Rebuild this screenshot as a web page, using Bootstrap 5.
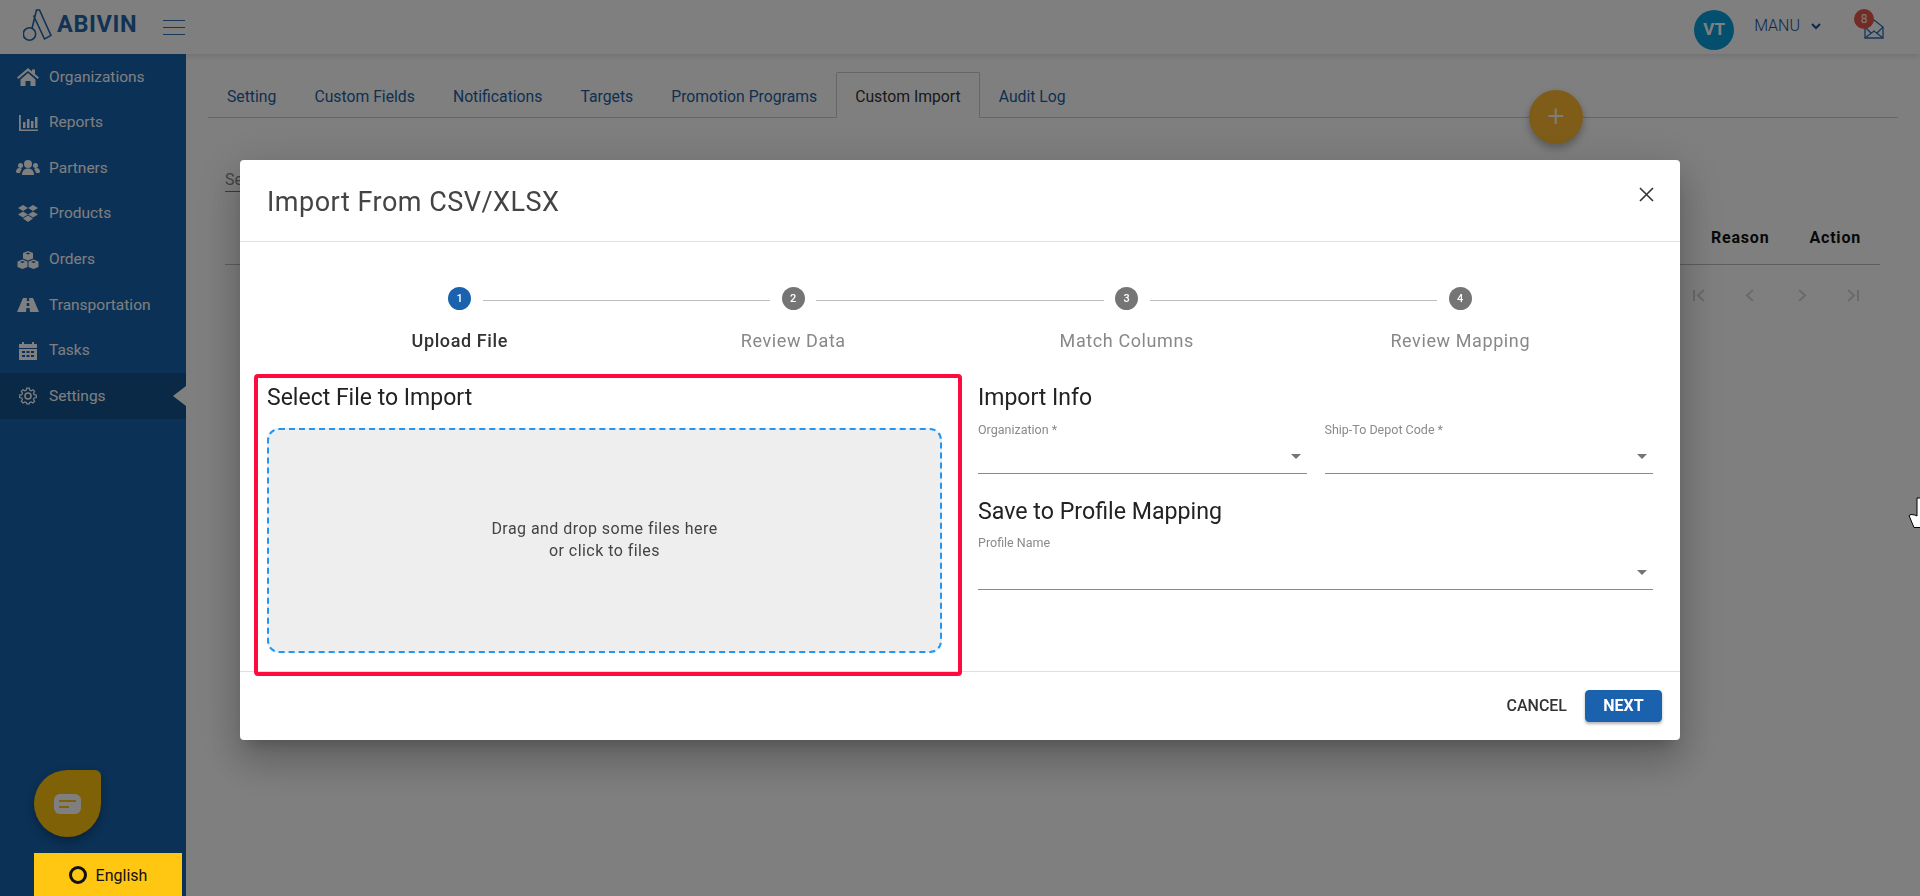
<!DOCTYPE html>
<html lang="en">
<head>
    <meta charset="UTF-8">
    <title>Import From CSV/XLSX - Abivin</title>
    <link href="https://cdn.jsdelivr.net/npm/bootstrap@5.3.0/dist/css/bootstrap.min.css" rel="stylesheet">
    <style>
        body {
            font-family: Roboto, "Liberation Sans", sans-serif;
            height: 896px;
            overflow: hidden;
            background: #fff;
        }
        .top-bar {
            height: 54px;
            background: #fff;
            box-shadow: 0 2px 6px rgba(0, 0, 0, .12);
            padding-left: 23px;
        }
        .brand-logo {
            margin-top: -3px;
        }
        .brand-name {
            font-size: 23.5px;
            font-weight: 700;
            letter-spacing: .6px;
            color: #2266ad;
            line-height: 1;
            margin: -4px 0 0 5px;
        }
        .burger {
            width: 22px;
            margin-left: 26px;
        }
        .burger i {
            display: block;
            height: 1px;
            background: #2a6eb5;
            margin: 6px 0;
        }
        .user-photo {
            width: 40px;
            height: 40px;
            border-radius: 50%;
            background: #089fdd;
            color: #fff;
            font-size: 17px;
            font-weight: 700;
            margin: 6px 20px 0 0;
        }
        .user-name {
            font-size: 16px;
            font-weight: 300;
            color: #1a4f9c;
            margin-top: -2px;
        }
        .user-arrow {
            margin: -2px 43px 0 11px;
        }
        .mail-box {
            width: 20px;
            height: 20px;
            margin: 4px 36px 0 0;
        }
        .mail-box svg {
            display: block;
        }
        .mail-count {
            top: -10px;
            left: -10px;
            width: 20px;
            height: 20px;
            border-radius: 50%;
            background: #e9554a;
            color: #fff;
            font-size: 12px;
            text-align: center;
            line-height: 20px;
        }
        .side-bar {
            width: 186px;
            background: #1662ac;
            height: 842px;
        }
        .side-link {
            height: 45.6px;
            color: #fff;
            font-size: 15.5px;
            padding: 1px 0 0 16px;
            text-decoration: none;
        }
        .side-link svg {
            width: 24px;
            height: 20px;
            margin-right: 9px;
            fill: #fff;
            flex: none;
        }
        .side-link.is-active {
            background: #13528f;
        }
        .side-link.is-active::after {
            content: "";
            position: absolute;
            right: 0;
            top: 13px;
            border: 10px solid transparent;
            border-left: 0;
            border-right: 13px solid #fff;
        }
        .chat-drop {
            width: 67px;
            height: 67px;
            margin: 0 0 16px 34px;
            background: #ffc20e;
            border-radius: 50% 6px 50% 50%;
            box-shadow: 0 4px 8px rgba(0, 0, 0, .3);
        }
        .lang-btn {
            z-index: 1060;
            width: 148px;
            height: 43px;
            margin-left: 34px;
            padding-top: 3px;
            background: #ffc612;
            color: #111;
            font-size: 16px;
            gap: 9px;
        }
        .lang-ring {
            width: 18px;
            height: 18px;
            border: 3px solid #111;
            border-radius: 50%;
            margin-top: -3px;
        }
        .main-area {
            padding: 18px 22px 0;
            min-width: 0;
        }
        .main-area .nav-tabs {
            --bs-nav-tabs-border-color: #c9cdd2;
            --bs-nav-tabs-link-active-border-color: #c9cdd2 #c9cdd2 #fff;
            --bs-nav-tabs-border-radius: 2px;
            --bs-nav-link-padding-x: 18px;
            --bs-nav-link-padding-y: 13px;
            --bs-nav-link-color: #225f9f;
            --bs-nav-tabs-link-active-color: #333;
            font-size: 15.75px;
            height: 46px;
        }
        .main-area .nav-link {
            height: 46px;
            line-height: 21px;
        }
        .add-fab {
            top: 36px;
            left: 1343px;
            width: 54px;
            height: 54px;
            border-radius: 50%;
            background: #ffbb33;
            color: #fff;
            font-size: 30px;
            font-weight: 300;
            line-height: 52px;
            text-align: center;
            box-shadow: 0 4px 8px rgba(0, 0, 0, .3);
        }
        .search-field {
            margin: 50px 0 0 17px;
            width: 200px;
            height: 24px;
            border-bottom: 1px solid #777;
            font-size: 16px;
            color: #888;
        }
        .head-row {
            height: 73px;
            margin: 0 18px 0 17px;
            border-bottom: 1px solid #bbb;
            font-size: 16px;
            font-weight: 700;
            letter-spacing: .8px;
            color: #111;
            padding-bottom: 14px;
        }
        .head-row span:first-child {
            margin-right: 40px;
        }
        .head-row span:last-child {
            margin-right: 19px;
        }
        .pager-row {
            margin: 22px 37px 0 0;
            gap: 34px;
        }
        .pager-row svg {
            width: 17px;
            height: 17px;
            fill: none;
            stroke: #d4d4d4;
            stroke-width: 2;
        }
        .import-dialog {
            --bs-modal-width: 1440px;
            --bs-modal-margin: 0;
            margin-top: 160px;
            height: 580px;
        }
        .import-dialog .modal-content {
            height: 580px;
            border: 0;
            border-radius: 4px;
            box-shadow: 0 11px 15px -7px rgba(0, 0, 0, .2), 0 24px 38px 3px rgba(0, 0, 0, .14), 0 9px 46px 8px rgba(0, 0, 0, .12);
        }
        .import-dialog .modal-header {
            height: 82px;
            padding: 0 26px 0 27px;
            border-bottom: 1px solid #e0e0e0;
            border-radius: 0;
        }
        .import-dialog .modal-title {
            font-size: 27px;
            font-weight: 400;
            color: #444;
            letter-spacing: .5px;
            line-height: 1;
            margin-top: 4px;
        }
        .close-x {
            width: 15px;
            height: 15px;
            margin-bottom: 12px;
            stroke: #333;
            stroke-width: 1.6;
        }
        .import-dialog .modal-body {
            padding: 45px 27px 0;
            flex: none;
            height: 429px;
        }
        .step-row {
            margin: 0 26px;
            height: 98px;
        }
        .step-cell {
            flex: 1 1 0;
            text-align: center;
            font-size: 18px;
            letter-spacing: .6px;
            color: #888;
        }
        .step-cell:not(:first-child)::before {
            content: "";
            position: absolute;
            top: 13px;
            height: 1px;
            left: calc(-50% + 23px);
            right: calc(50% + 23px);
            background: #bdbdbd;
        }
        .step-dot {
            width: 23px;
            height: 23px;
            border-radius: 50%;
            background: #757575;
            color: #fff;
            font-size: 11px;
            font-weight: 500;
            line-height: 23px;
            margin: 0 auto 17px;
            letter-spacing: 0;
        }
        .step-cell.is-current {
            color: #333;
            font-weight: 500;
        }
        .step-cell.is-current .step-dot {
            background: #1a62ad;
        }
        .pick-col {
            width: 675px;
            flex: none;
        }
        .red-frame {
            top: -11px;
            left: -13px;
            width: 708px;
            height: 302px;
            border: 4px solid #ff0a3e;
            border-radius: 4px;
            pointer-events: none;
        }
        .info-col {
            margin-left: 36px;
            width: 675px;
            flex: none;
        }
        .block-title {
            font-size: 23px;
            font-weight: 400;
            color: #222;
            line-height: 26px;
            margin: 0;
        }
        .block-title.is-next {
            margin-top: 24px;
            font-size: 23.2px;
        }
        .drop-zone {
            height: 225px;
            margin-top: 17px;
            padding-bottom: 2px;
            background: #eee;
            border: 2px dashed #2196f3;
            border-radius: 12px;
            font-size: 16px;
            line-height: 22px;
            letter-spacing: .45px;
            color: #444;
            text-align: center;
        }
        .field-pair {
            gap: 18px;
        }
        .pick-field {
            flex: 1 1 0;
            height: 51px;
            border-bottom: 1px solid #8a8a8a;
            font-size: 12.5px;
            color: #8a8a8a;
            line-height: 14px;
            margin-top: 12px;
        }
        .pick-field.is-wide {
            height: 54px;
        }
        .pick-field::after {
            content: "";
            position: absolute;
            right: 6px;
            bottom: 14px;
            border: 5px solid transparent;
            border-bottom: 0;
            border-top-color: #757575;
        }
        .import-dialog .modal-footer {
            height: 69px;
            padding: 0 18px;
            border-top: 1px solid #e0e0e0;
            border-radius: 0;
            gap: 18px;
        }
        .import-dialog .modal-footer > * {
            margin: 0;
        }
        .cancel-btn {
            padding: 0;
            border: 0;
            font-size: 16px;
            font-weight: 500;
            color: #333;
        }
        .next-btn {
            width: 77px;
            height: 32px;
            padding: 0;
            background: #1a62ad;
            border-color: #1a62ad;
            font-size: 16px;
            font-weight: 700;
            border-radius: 4px;
            box-shadow: 0 2px 3px rgba(0, 0, 0, .3);
        }
        .hand-cursor {
            top: 497px;
            left: 1907px;
            z-index: 1070;
        }
    </style>
</head>
<body>
    <!-- Top bar -->
    <header class="top-bar d-flex align-items-center">
        <svg class="brand-logo" width="29" height="33" viewBox="0 0 29 33" fill="none" stroke="#2266ad" stroke-width="1.6">
            <circle cx="6.500" cy="25" r="6.200"/>
            <path d="M9 19.500 13.500 1h3L28 26.500 21.500 30 10.500 6.500"/>
        </svg>
        <span class="brand-name">ABIVIN</span>
        <div class="burger"><i></i><i></i><i></i></div>
        <div class="ms-auto d-flex align-items-center">
            <div class="user-photo d-flex align-items-center justify-content-center">VT</div>
            <span class="user-name">MANU</span>
            <svg class="user-arrow" width="10" height="7" viewBox="0 0 10 7" fill="none" stroke="#1a4f9c" stroke-width="2"><path d="M1 1l4 4 4-4"/></svg>
            <div class="mail-box position-relative">
                <svg width="20" height="20" viewBox="0 0 20 20" fill="none" stroke="#2a6eb5" stroke-width="1.300"><path d="M1 8 10 1l9 7v11H1z"/><path d="M1 19l9-7 9 7M1 8l6 6M19 8l-6 6"/></svg>
                <span class="mail-count position-absolute">8</span>
            </div>
        </div>
    </header>

    <div class="d-flex">
        <!-- Side menu -->
        <aside class="side-bar d-flex flex-column flex-shrink-0">
            <a class="side-link d-flex align-items-center" href="#">
                <svg viewBox="0 0 24 20"><path d="M12 1 1 10.500l1.300 1.500L12 4l9.700 8 1.300-1.500-4-3.500V2.500h-3v2zM4.500 12.500V19h5v-5h5v5h5v-6.500L12 6z"/></svg>Organizations
            </a>
            <a class="side-link d-flex align-items-center" href="#">
                <svg viewBox="0 0 24 20"><path d="M3 2h1.800v14.500H22V18H3zM7 9h2.500v6H7zM11 6h2.500v9H11zM15 8h2.500v7H15zM19 4h2.500v11H19z"/></svg>Reports
            </a>
            <a class="side-link d-flex align-items-center" href="#">
                <svg viewBox="0 0 24 20"><circle cx="12" cy="6" r="4"/><circle cx="4.500" cy="7.500" r="2.500"/><circle cx="19.500" cy="7.500" r="2.500"/><path d="M6 17c0-4 2-6.500 6-6.500s6 2.500 6 6.500zM0 14c0-2.500 1.500-4 3.500-4 1 0 1.800.3 2.500 1-1 1-1.700 2.200-1.900 4H1zM24 14c0-2.500-1.500-4-3.500-4-1 0-1.800.3-2.500 1 1 1 1.700 2.200 1.900 4H23z"/></svg>Partners
            </a>
            <a class="side-link d-flex align-items-center" href="#">
                <svg viewBox="0 0 24 20"><path d="M7 1l5 3-5 3-5-3zM17 1l5 3-5 3-5-3zM7 7.500l5 3-5 3-5-3zM17 7.500l5 3-5 3-5-3zM7 14.500l5-3 5 3-5 3.500z"/></svg>Products
            </a>
            <a class="side-link d-flex align-items-center" href="#">
                <svg viewBox="0 0 24 20" fill-rule="evenodd"><path d="M12 1l5 2v5.500l-5 2-5-2V3zM9.500 3.500l2.500 1 2.500-1-2.500-1zM6.500 9.500l5 2V17l-5 2-5-2v-5.500zM4 12l2.500 1L9 12l-2.500-1zM17.500 9.500l5 2V17l-5 2-5-2v-5.500zM15 12l2.500 1 2.500-1-2.500-1z"/></svg>Orders
            </a>
            <a class="side-link d-flex align-items-center" href="#">
                <svg viewBox="0 0 24 20"><path d="M7 3h4l-.3 3h2.600L13 3h4l6 14H14l-.4-4h-3.200L10 17H1zM10.800 8l-.2 3h2.800l-.2-3z"/></svg>Transportation
            </a>
            <a class="side-link d-flex align-items-center" href="#">
                <svg viewBox="0 0 24 20"><path d="M6 1h2v2h8V1h2v2h3v4H3V3h3zM3 8h18v11H3zM6 10v2h3v-2zM10.500 10v2h3v-2zM15 10v2h3v-2zM6 14v2h3v-2zM10.500 14v2h3v-2zM15 14v2h3v-2z" fill-rule="evenodd"/></svg>Tasks
            </a>
            <a class="side-link is-active d-flex align-items-center position-relative" href="#">
                <svg viewBox="0 0 24 20" fill="none" style="fill:none" stroke="#fff" stroke-width="1.500"><path d="M10.500 1h3l.5 2.500 1.800.8L18 3l2 2-1.300 2.200.8 1.800 2.500.5v3l-2.500.5-.8 1.800L20 17l-2 2-2.200-1.300-1.800.8-.5 1.500h-3l-.5-1.500-1.800-.8L6 19l-2-2 1.300-2.200-.8-1.800L2 12.500v-3L4.500 9l.8-1.800L4 5l2-2 2.200 1.300 1.800-.8z" transform="translate(2 1.200) scale(.83 .83)"/><circle cx="12" cy="10" r="3"/></svg>Settings
            </a>
            <div class="mt-auto">
                <div class="chat-drop d-flex align-items-center justify-content-center">
                    <svg width="27" height="20" viewBox="0 0 27 20"><rect width="27" height="20" rx="6" fill="#fff"/><path d="M5 7h17M5 13h10" stroke="#ffc20e" stroke-width="2"/></svg>
                </div>
                <div class="lang-btn position-relative d-flex align-items-center justify-content-center">
                    <span class="lang-ring"></span>English
                </div>
            </div>
        </aside>

        <!-- Page behind the dialog -->
        <main class="main-area flex-grow-1 position-relative">
            <ul class="nav nav-tabs">
                <li class="nav-item"><a class="nav-link" href="#">Setting</a></li>
                <li class="nav-item"><a class="nav-link" href="#">Custom Fields</a></li>
                <li class="nav-item"><a class="nav-link" href="#">Notifications</a></li>
                <li class="nav-item"><a class="nav-link" href="#">Targets</a></li>
                <li class="nav-item"><a class="nav-link" href="#">Promotion Programs</a></li>
                <li class="nav-item"><a class="nav-link active" href="#">Custom Import</a></li>
                <li class="nav-item"><a class="nav-link" href="#">Audit Log</a></li>
            </ul>
            <div class="add-fab position-absolute">+</div>
            <div class="search-field">Search</div>
            <div class="head-row d-flex justify-content-end align-items-end">
                <span>Reason</span><span>Action</span>
            </div>
            <div class="pager-row d-flex justify-content-end">
                <svg viewBox="0 0 17 17"><path d="M3 3v11M13 3 7 8.500 13 14"/></svg>
                <svg viewBox="0 0 17 17"><path d="M11 3 5 8.500 11 14"/></svg>
                <svg viewBox="0 0 17 17"><path d="M6 3l6 5.500L6 14"/></svg>
                <svg viewBox="0 0 17 17"><path d="M14 3v11M4 3l6 5.500L4 14"/></svg>
            </div>
        </main>
    </div>

    <div class="modal-backdrop show"></div>

    <!-- Import dialog -->
    <div class="modal d-block">
        <div class="modal-dialog import-dialog">
            <div class="modal-content">
                <div class="modal-header">
                    <h5 class="modal-title">Import From CSV/XLSX</h5>
                    <svg class="close-x" viewBox="0 0 15 15"><path d="M1 1l13 13M14 1 1 14"/></svg>
                </div>
                <div class="modal-body">
                    <div class="step-row d-flex">
                        <div class="step-cell is-current position-relative"><div class="step-dot">1</div>Upload File</div>
                        <div class="step-cell position-relative"><div class="step-dot">2</div>Review Data</div>
                        <div class="step-cell position-relative"><div class="step-dot">3</div>Match Columns</div>
                        <div class="step-cell position-relative"><div class="step-dot">4</div>Review Mapping</div>
                    </div>
                    <div class="d-flex">
                        <div class="pick-col position-relative">
                            <h6 class="block-title">Select File to Import</h6>
                            <div class="drop-zone d-flex align-items-center justify-content-center">
                                <div>Drag and drop some files here<br>or click to files</div>
                            </div>
                            <div class="red-frame position-absolute"></div>
                        </div>
                        <div class="info-col">
                            <h6 class="block-title">Import Info</h6>
                            <div class="field-pair d-flex">
                                <div class="pick-field position-relative">Organization *</div>
                                <div class="pick-field position-relative">Ship-To Depot Code *</div>
                            </div>
                            <h6 class="block-title is-next">Save to Profile Mapping</h6>
                            <div class="pick-field is-wide position-relative">Profile Name</div>
                        </div>
                    </div>
                </div>
                <div class="modal-footer">
                    <button type="button" class="btn cancel-btn">CANCEL</button>
                    <button type="button" class="btn btn-primary next-btn">NEXT</button>
                </div>
            </div>
        </div>
    </div>

    <!-- Mouse pointer caught at the window edge -->
    <svg class="hand-cursor position-fixed" width="13" height="32" viewBox="0 0 13 32" fill="#fff" stroke="#000"><path d="M10 1v18l-2-1-4-.5-2 1 5 12h7V1z"/></svg>

    <script src="https://cdn.jsdelivr.net/npm/bootstrap@5.3.0/dist/js/bootstrap.bundle.min.js"></script>
</body>
</html>
